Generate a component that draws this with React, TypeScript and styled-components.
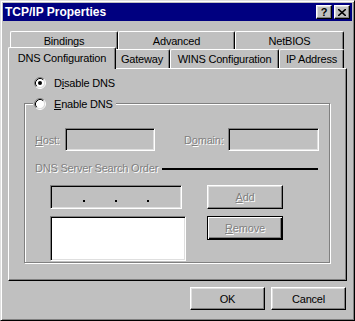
import styled, { createGlobalStyle, css } from 'styled-components';

const GlobalStyle = createGlobalStyle`
    html, body {
        margin: 0;
        padding: 0;
        background: #c0c0c0;
    }
    body {
        font-family: 'Liberation Sans', Arial, sans-serif;
        font-size: 11px;
        letter-spacing: -0.2px;
        color: #000;
    }
`;

const Window = styled.div`
    width: 355px;
    height: 321px;
    box-sizing: border-box;
    background: #c0c0c0;
    border: 1px solid;
    border-color: #dfdfdf #000 #000 #dfdfdf;
    box-shadow: inset 1px 1px #fff, inset -1px -1px #808080;
    padding: 2px;
    display: flex;
    flex-direction: column;
`;

const TitleBar = styled.div`
    height: 18px;
    background: #000080;
    display: flex;
    align-items: center;
    justify-content: space-between;
    padding: 0 2px 0 2px;
`;

const Title = styled.span`
    color: #fff;
    font-weight: bold;
    font-size: 12px;
    letter-spacing: 0;
`;

const TitleButtons = styled.div`
    display: flex;
    gap: 2px;
`;

const bevel = css`
    box-sizing: border-box;
    background: #c0c0c0;
    border: 1px solid;
    border-color: #fff #000 #000 #fff;
    box-shadow: inset -1px -1px #808080, inset 1px 1px #dfdfdf;
`;

const TitleButton = styled.div`
    ${bevel}
    width: 16px;
    height: 14px;
    display: flex;
    align-items: center;
    justify-content: center;
    font-weight: bold;
    font-size: 11px;
    line-height: 1;
`;

const Body = styled.div`
    flex: 1;
    display: flex;
    flex-direction: column;
    padding: 11px 5px 0 5px;
`;

const TabRow = styled.div<{ $height: number }>`
    display: flex;
    align-items: flex-end;
    height: ${({ $height }) => $height}px;
    margin-left: 2px;
`;

const Tab = styled.div<{ $width: number; $active?: boolean; $height: number }>`
    box-sizing: border-box;
    width: ${({ $width }) => $width}px;
    height: ${({ $height }) => $height}px;
    background: #c0c0c0;
    border-left: 1px solid #fff;
    border-top: 1px solid #fff;
    border-right: 1px solid #000;
    border-top-left-radius: 2px;
    border-top-right-radius: 2px;
    box-shadow: inset -1px 0 #808080;
    display: flex;
    align-items: center;
    justify-content: center;
    white-space: nowrap;
    ${({ $active, $width, $height }) =>
        $active &&
        css`
            position: relative;
            z-index: 2;
            width: ${$width + 4}px;
            height: ${$height + 3}px;
            margin: 0 -2px -1px -2px;
            padding-bottom: 2px;
        `}
`;

const Panel = styled.div`
    box-sizing: border-box;
    width: 339px;
    height: 213px;
    border: 1px solid;
    border-color: #fff #000 #000 #fff;
    box-shadow: inset -1px -1px #808080;
    padding: 7px 0 0 15px;
    display: flex;
    flex-direction: column;
`;

const RadioRow = styled.label<{ $indent?: number }>`
    display: flex;
    align-items: center;
    gap: 8px;
    height: 13px;
    margin-left: ${({ $indent }) => $indent ?? 0}px;
`;

const Group = styled.div`
    box-sizing: border-box;
    width: 306px;
    height: 160px;
    margin-top: 14px;
    border: 1px solid #808080;
    box-shadow: inset 1px 1px #fff, 1px 1px 0 #fff;
    display: flex;
    flex-direction: column;
`;

const Legend = styled.div`
    align-self: flex-start;
    display: flex;
    align-items: center;
    gap: 8px;
    height: 13px;
    margin: -7px 0 0 8px;
    padding: 0 3px 0 1px;
    background: #c0c0c0;
`;

const Disabled = styled.span`
    color: #808080;
    text-shadow: 1px 1px 0 #fff;
`;

const FieldRow = styled.div`
    display: flex;
    align-items: center;
    margin: 18px 0 0 10px;
`;

const FieldLabel = styled(Disabled)<{ $width: number; $gap?: number }>`
    width: ${({ $width }) => $width}px;
    margin-left: ${({ $gap }) => $gap ?? 0}px;
`;

const sunken = css`
    box-sizing: border-box;
    border: 1px solid;
    border-color: #808080 #fff #fff #808080;
    box-shadow: inset 1px 1px #000, inset -1px -1px #dfdfdf;
`;

const TextBox = styled.div<{ $width: number; $height: number; $white?: boolean }>`
    ${sunken}
    width: ${({ $width }) => $width}px;
    height: ${({ $height }) => $height}px;
    background: ${({ $white }) => ($white ? '#fff' : '#c0c0c0')};
`;

const SectionRow = styled.div`
    display: flex;
    align-items: center;
    gap: 4px;
    width: 283px;
    margin: 11px 0 0 10px;
`;

const Rule = styled.div`
    flex: 1;
    height: 2px;
    background: #000;
    margin-top: 2px;
`;

const ServerGrid = styled.div`
    display: grid;
    grid-template-columns: 136px 76px;
    column-gap: 21px;
    row-gap: 7px;
    margin: 11px 0 0 25px;
`;

const IpBox = styled(TextBox)`
    display: flex;
    align-items: flex-end;
    padding: 0 2px 6px;
`;

const IpSegment = styled.div`
    flex: 1;
`;

const IpDot = styled.div`
    width: 2px;
    height: 2px;
    background: #000;
`;

const Button = styled.div<{ $default?: boolean; $width?: number; $height?: number }>`
    ${bevel}
    width: ${({ $width }) => $width ?? 76}px;
    height: ${({ $height }) => $height ?? 24}px;
    display: flex;
    align-items: center;
    justify-content: center;
    ${({ $default }) =>
        $default &&
        css`
            border-color: #000;
            box-shadow: inset 1px 1px #fff, inset -1px -1px #000, inset -2px -2px #808080;
        `}
`;

const Footer = styled.div`
    display: flex;
    justify-content: flex-end;
    gap: 6px;
    margin-top: 6px;
    padding-right: 1px;
`;

const Radio = ({ checked }: { checked?: boolean }) => (
    <svg width="12" height="12" viewBox="0 0 12 12">
        <circle cx="6" cy="6" r="4.5" fill="#fff" />
        <path d="M2.11 9.89A5.5 5.5 0 0 1 9.89 2.11" stroke="#808080" fill="none" />
        <path d="M9.89 2.11A5.5 5.5 0 0 1 2.11 9.89" stroke="#fff" fill="none" />
        <path d="M2.82 9.18A4.5 4.5 0 0 1 9.18 2.82" stroke="#000" fill="none" />
        <path d="M9.18 2.82A4.5 4.5 0 0 1 2.82 9.18" stroke="#dfdfdf" fill="none" />
        {checked && <circle cx="6" cy="6" r="2" fill="#000" />}
    </svg>
);

const CloseGlyph = () => (
    <svg width="8" height="7" viewBox="0 0 8 7">
        <path d="M0 0L8 7M8 0L0 7" stroke="#000" strokeWidth="1.6" />
    </svg>
);

const backTabs = [
    { label: 'Bindings', width: 108 },
    { label: 'Advanced', width: 117 },
    { label: 'NetBIOS', width: 109 },
];

const frontTabs = [
    { label: 'DNS Configuration', width: 104, active: true },
    { label: 'Gateway', width: 56 },
    { label: 'WINS Configuration', width: 109 },
    { label: 'IP Address', width: 65 },
];

export default function App() {
    return (
        <>
            <GlobalStyle />
            <Window>
                <TitleBar>
                    <Title>TCP/IP Properties</Title>
                    <TitleButtons>
                        <TitleButton>?</TitleButton>
                        <TitleButton>
                            <CloseGlyph />
                        </TitleButton>
                    </TitleButtons>
                </TitleBar>
                <Body>
                    <TabRow $height={17}>
                        {backTabs.map(tab => (
                            <Tab key={tab.label} $width={tab.width} $height={18}>
                                {tab.label}
                            </Tab>
                        ))}
                    </TabRow>
                    <TabRow $height={19}>
                        {frontTabs.map(tab => (
                            <Tab key={tab.label} $width={tab.width} $height={19} $active={tab.active}>
                                {tab.label}
                            </Tab>
                        ))}
                    </TabRow>
                    <Panel>
                        <RadioRow $indent={10}>
                            <Radio checked />
                            <span>
                                D<u>i</u>sable DNS
                            </span>
                        </RadioRow>
                        <Group>
                            <Legend>
                                <Radio />
                                <span>
                                    <u>E</u>nable DNS
                                </span>
                            </Legend>
                            <FieldRow>
                                <FieldLabel $width={30}>
                                    <u>H</u>ost:
                                </FieldLabel>
                                <TextBox $width={90} $height={23} />
                                <FieldLabel $width={44} $gap={29}>
                                    D<u>o</u>main:
                                </FieldLabel>
                                <TextBox $width={91} $height={23} />
                            </FieldRow>
                            <SectionRow>
                                <Disabled>DNS Server Search Order</Disabled>
                                <Rule />
                            </SectionRow>
                            <ServerGrid>
                                <IpBox $width={132} $height={24}>
                                    <IpSegment />
                                    <IpDot />
                                    <IpSegment />
                                    <IpDot />
                                    <IpSegment />
                                    <IpDot />
                                    <IpSegment />
                                </IpBox>
                                <Button>
                                    <Disabled>
                                        <u>A</u>dd
                                    </Disabled>
                                </Button>
                                <TextBox $width={136} $height={45} $white />
                                <Button $default>
                                    <Disabled>
                                        <u>R</u>emove
                                    </Disabled>
                                </Button>
                            </ServerGrid>
                        </Group>
                    </Panel>
                    <Footer>
                        <Button $width={75} $height={23}>
                            OK
                        </Button>
                        <Button $width={75} $height={23}>
                            Cancel
                        </Button>
                    </Footer>
                </Body>
            </Window>
        </>
    );
}
